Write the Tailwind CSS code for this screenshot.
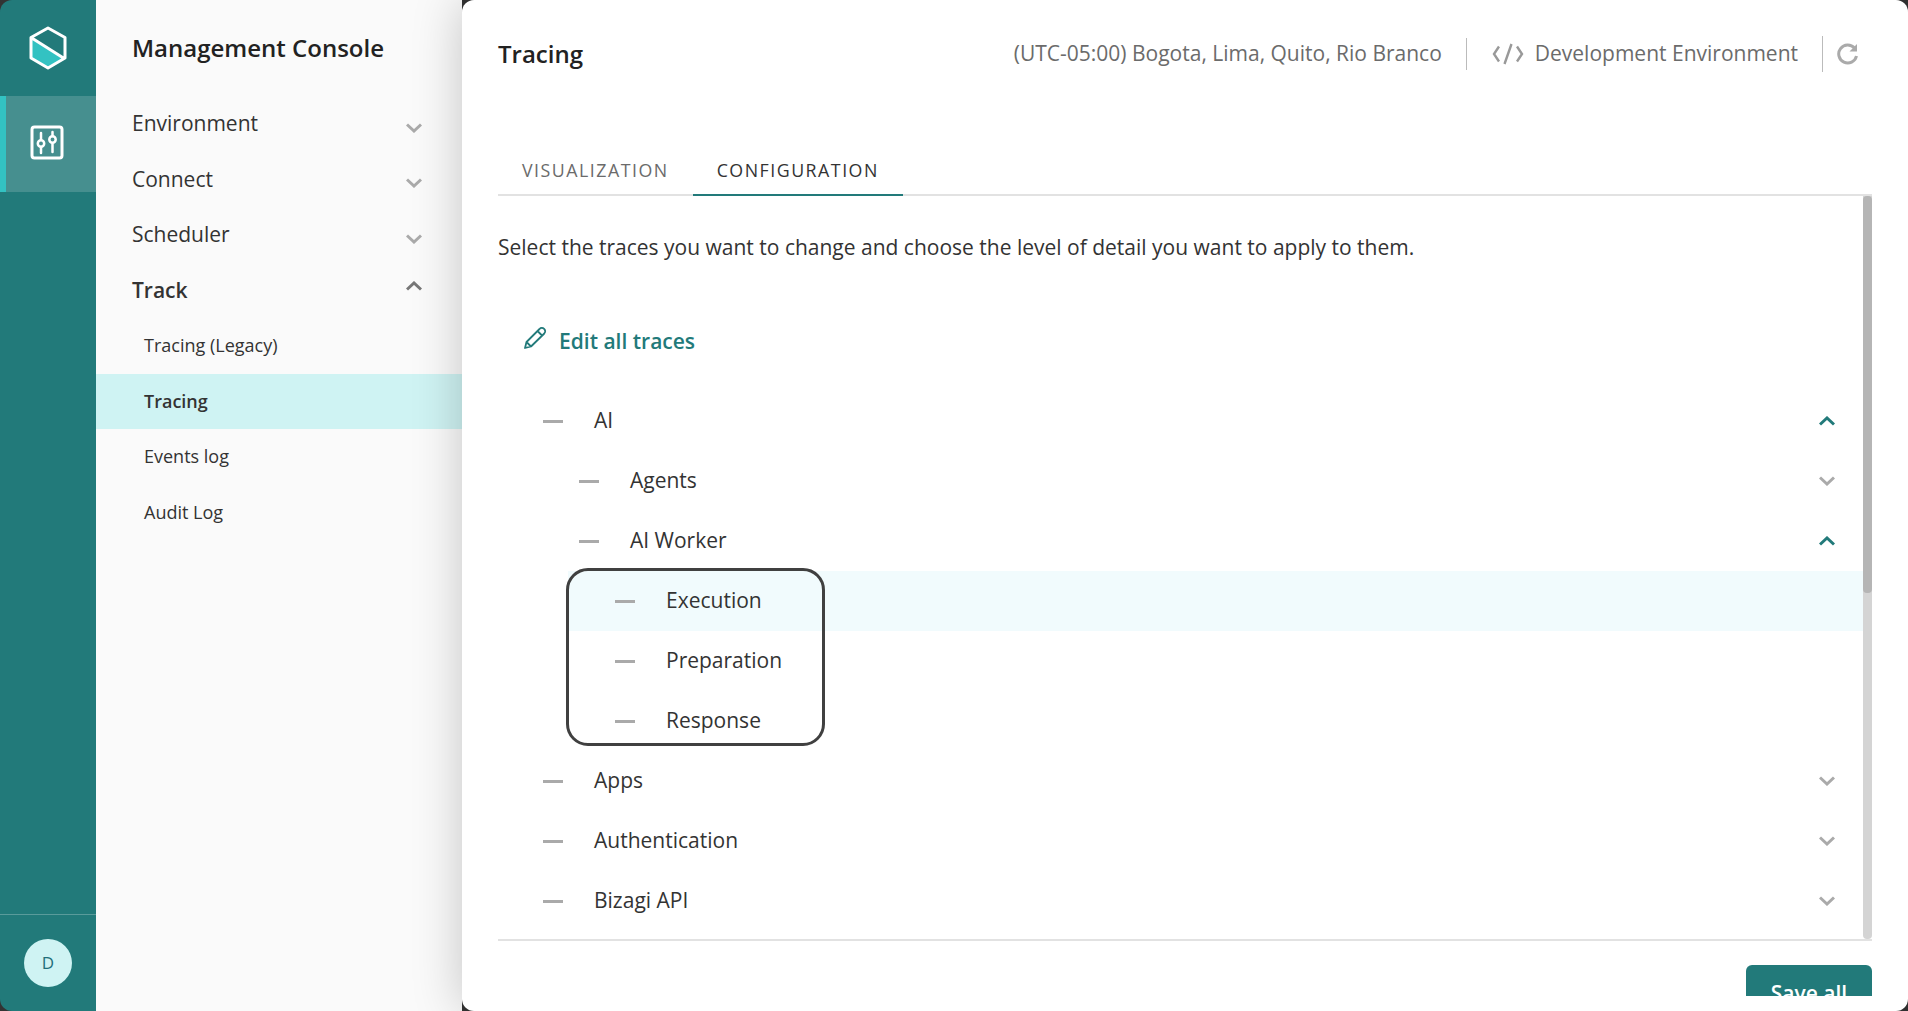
<!DOCTYPE html>
<html lang="en">

<head>
  <meta charset="UTF-8">
  <title>Tracing</title>
  <script src="https://cdn.jsdelivr.net/npm/@tailwindcss/browser@4"></script>
</head>

<body class="bg-[#333333] h-[1011px] w-[1908px] overflow-hidden font-['Open_Sans',sans-serif]">
  <div class="flex h-[1011px] w-[1908px]">
    <!-- Icon rail -->
    <aside class="w-[96px] shrink-0 bg-[#227a7a] rounded-l-[12px] flex flex-col">
      <div class="h-[96px] flex items-center justify-center">
        <svg width="40" height="44" viewBox="0 0 40 44" fill="none">
          <path d="M3 12 L35 33 L20 41 L3 32 Z" fill="#33c2c2" />
          <path d="M20 2 L37 11.500 V32 L20 42 L3 32 V11.500 Z M3 11.500 L37 33" stroke="#fff" stroke-width="3" stroke-linejoin="round" />
        </svg>
      </div>
      <div class="h-[96px] bg-[#468f8f] border-l-[6px] border-[#33c2c2] flex items-center pl-[24px]">
        <svg class="mb-[2px]" width="36" height="36" viewBox="0 0 36 36" fill="none" stroke="#fff" stroke-width="3">
          <rect x="2" y="2" width="30" height="31" rx="2.500" />
          <path d="M11 8 V14 M11 22 V28 M22.500 7 V11 M22.500 19 V27" stroke-linecap="round" stroke-width="2.500" />
          <circle cx="11" cy="18.500" r="3.200" stroke-width="2.500" />
          <circle cx="22.500" cy="14.500" r="3.200" stroke-width="2.500" />
        </svg>
      </div>
      <div class="mt-auto h-[97px] border-t border-[#5a9b9b] flex items-center justify-center">
        <div class="w-[48px] h-[48px] rounded-full bg-[#cff3f3] flex items-center justify-center text-[17px] text-[#1f6f7a]">D</div>
      </div>
    </aside>

    <!-- Section menu -->
    <nav class="w-[366px] shrink-0 bg-[#fafafa] text-[#333333]">
      <h1 class="pl-[36px] h-[96px] flex items-center text-[24px] font-semibold text-[#222222]">Management Console</h1>
      <ul class="text-[21px]">
        <li class="h-[55.500px] pl-[36px] pr-[40px] flex items-center justify-between">Environment
          <svg class="mt-[8px]" width="16" height="10" viewBox="0 0 16 10" fill="none" stroke="#aaaaaa" stroke-width="3"><path d="M1 1.500 L8 8 L15 1.500" /></svg>
        </li>
        <li class="h-[55.500px] pl-[36px] pr-[40px] flex items-center justify-between">Connect
          <svg class="mt-[8px]" width="16" height="10" viewBox="0 0 16 10" fill="none" stroke="#aaaaaa" stroke-width="3"><path d="M1 1.500 L8 8 L15 1.500" /></svg>
        </li>
        <li class="h-[55.500px] pl-[36px] pr-[40px] flex items-center justify-between">Scheduler
          <svg class="mt-[8px]" width="16" height="10" viewBox="0 0 16 10" fill="none" stroke="#aaaaaa" stroke-width="3"><path d="M1 1.500 L8 8 L15 1.500" /></svg>
        </li>
        <li class="h-[55.500px] pl-[36px] pr-[40px] flex items-center justify-between font-semibold">Track
          <svg class="mb-[8px]" width="16" height="10" viewBox="0 0 16 10" fill="none" stroke="#777777" stroke-width="3"><path d="M1 8.500 L8 2 L15 8.500" /></svg>
        </li>
      </ul>
      <ul class="text-[18px]">
        <li class="h-[55.500px] pl-[48px] flex items-center">Tracing (Legacy)</li>
        <li class="h-[55.500px] pl-[48px] flex items-center bg-[#cff3f3] font-semibold">Tracing</li>
        <li class="h-[55.500px] pl-[48px] flex items-center">Events log</li>
        <li class="h-[55.500px] pl-[48px] flex items-center">Audit Log</li>
      </ul>
    </nav>

    <!-- Main panel -->
    <main class="relative flex-1 bg-white rounded-[12px] shadow-[0_0_50px_rgba(0,0,0,0.22)] pl-[36px] pr-[36px] flex flex-col">
      <header class="h-[108px] flex items-center justify-between">
        <h2 class="text-[24px] font-semibold text-[#222222]">Tracing</h2>
        <div class="flex items-center text-[21px] text-[#6b6b6b] mr-[13px]">
          <span>(UTC-05:00) Bogota, Lima, Quito, Rio Branco</span>
          <span class="w-px h-[32px] bg-[#bbbbbb] ml-[24px] mr-[25px]"></span>
          <svg width="32" height="24" viewBox="0 0 32 24" fill="none" stroke="#999999" stroke-width="2.400"><path d="M7 4.500 L2 12 L7 19.500 M25 4.500 L30 12 L25 19.500 M19.500 2 L12.500 22" /></svg>
          <span class="ml-[11px]">Development Environment</span>
          <span class="w-px h-[36px] bg-[#bbbbbb] ml-[24px] mr-[14px]"></span>
          <svg width="22" height="22" viewBox="0 0 22 22" fill="none" stroke="#aaaaaa" stroke-width="3"><path d="M17.500 5 A9 9 0 1 0 19.500 13" /><path d="M20 1 V8.500 H12.500" fill="#aaaaaa" stroke="none" /></svg>
        </div>
      </header>

      <div class="h-[88px] flex items-end border-b-2 border-[#e2e2e2] text-[17.800px] tracking-[1.500px]">
        <span class="h-[48px] px-[24px] flex items-center text-[#6b6b6b]">VISUALIZATION</span>
        <span class="h-[50px] px-[24px] flex items-center text-[#333333] border-b-2 border-[#227a7a] mb-[-2px]">CONFIGURATION</span>
      </div>

      <section class="relative flex-1 border-b-2 border-[#e2e2e2] text-[#333333] text-[21px]">
        <p class="h-[103px] flex items-center">Select the traces you want to change and choose the level of detail you want to apply to them.</p>
        <div class="h-[85px] mb-[7px] flex items-center pl-[25px] text-[#227a7a] font-semibold">
          <svg class="mr-[12px] mb-[7px]" width="24" height="24" viewBox="0 0 24 24" fill="none" stroke="#227a7a" stroke-width="1.800" stroke-linejoin="round"><path d="M2 22 L3.500 16 L16.500 3 A3 3 0 0 1 21.300 7.500 L8 20.500 Z M3.500 16 L8 20.500 M14.500 5 L19 9.500" /></svg>
          Edit all traces
        </div>
        <ul class="pr-[37px]">
          <li class="h-[60px] flex items-center pl-[45px]"><span class="w-[20px] h-[3px] bg-[#aaaaaa] mr-[31px]"></span>AI
            <svg class="ml-auto" width="16" height="10" viewBox="0 0 16 10" fill="none" stroke="#227a7a" stroke-width="3"><path d="M1 8.500 L8 2 L15 8.500" /></svg>
          </li>
          <li class="h-[60px] flex items-center pl-[81px]"><span class="w-[20px] h-[3px] bg-[#aaaaaa] mr-[31px]"></span>Agents
            <svg class="ml-auto" width="16" height="10" viewBox="0 0 16 10" fill="none" stroke="#aaaaaa" stroke-width="3"><path d="M1 1.500 L8 8 L15 1.500" /></svg>
          </li>
          <li class="h-[60px] flex items-center pl-[81px]"><span class="w-[20px] h-[3px] bg-[#aaaaaa] mr-[31px]"></span>AI Worker
            <svg class="ml-auto" width="16" height="10" viewBox="0 0 16 10" fill="none" stroke="#227a7a" stroke-width="3"><path d="M1 8.500 L8 2 L15 8.500" /></svg>
          </li>
          <li class="h-[60px] ml-[70px] mr-[-28px] bg-[#f1fbfd] flex items-center pl-[47px]"><span class="w-[20px] h-[3px] bg-[#aaaaaa] mr-[31px]"></span>Execution</li>
          <li class="h-[60px] flex items-center pl-[117px]"><span class="w-[20px] h-[3px] bg-[#aaaaaa] mr-[31px]"></span>Preparation</li>
          <li class="h-[60px] flex items-center pl-[117px]"><span class="w-[20px] h-[3px] bg-[#aaaaaa] mr-[31px]"></span>Response</li>
          <li class="h-[60px] flex items-center pl-[45px]"><span class="w-[20px] h-[3px] bg-[#aaaaaa] mr-[31px]"></span>Apps
            <svg class="ml-auto" width="16" height="10" viewBox="0 0 16 10" fill="none" stroke="#aaaaaa" stroke-width="3"><path d="M1 1.500 L8 8 L15 1.500" /></svg>
          </li>
          <li class="h-[60px] flex items-center pl-[45px]"><span class="w-[20px] h-[3px] bg-[#aaaaaa] mr-[31px]"></span>Authentication
            <svg class="ml-auto" width="16" height="10" viewBox="0 0 16 10" fill="none" stroke="#aaaaaa" stroke-width="3"><path d="M1 1.500 L8 8 L15 1.500" /></svg>
          </li>
          <li class="h-[60px] flex items-center pl-[45px]"><span class="w-[20px] h-[3px] bg-[#aaaaaa] mr-[31px]"></span>Bizagi API
            <svg class="ml-auto" width="16" height="10" viewBox="0 0 16 10" fill="none" stroke="#aaaaaa" stroke-width="3"><path d="M1 1.500 L8 8 L15 1.500" /></svg>
          </li>
        </ul>
        <!-- scrollbar -->
        <div class="absolute right-0 top-0 bottom-0 w-[9px] bg-[#d4d4d4] rounded-b-[4px]"></div>
        <div class="absolute right-0 top-0 h-[397px] w-[9px] bg-[#b5b5b5] rounded-[4px]"></div>
        <!-- callout round the AI Worker children -->
        <div class="absolute left-[68px] top-[372px] w-[259px] h-[178px] border-[3px] border-[#404040] rounded-[22px]"></div>
      </section>

      <div class="h-[55px] flex justify-end items-start overflow-hidden pt-[24px]">
        <button class="w-[126px] h-[58px] shrink-0 bg-[#227a7a] rounded-[6px] text-white font-semibold text-[21px]">Save all</button>
      </div>
      <div class="h-[15px]"></div>
    </main>
  </div>
</body>

</html>
